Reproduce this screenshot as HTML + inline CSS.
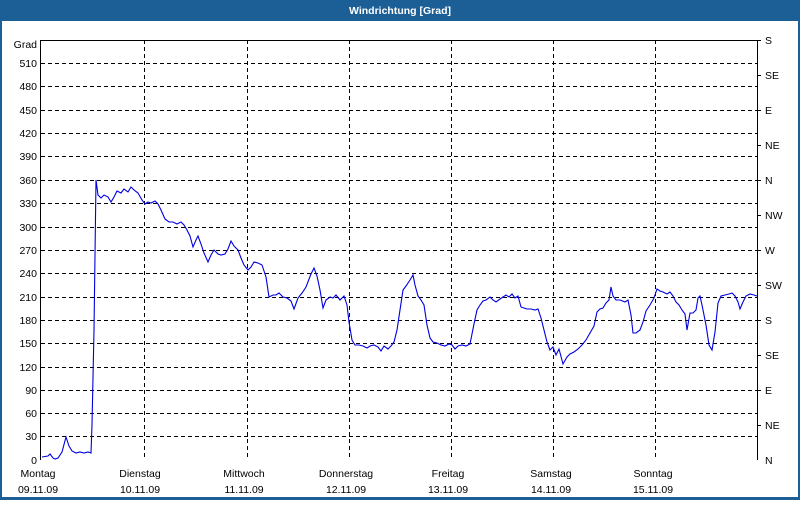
<!DOCTYPE html>
<html><head><meta charset="utf-8"><style>
html,body{margin:0;padding:0;}
body{width:800px;height:500px;overflow:hidden;background:#fff;font-family:"Liberation Sans","DejaVu Sans",sans-serif;}
</style></head><body>
<svg width="800" height="500" xmlns="http://www.w3.org/2000/svg" font-family="Liberation Sans, sans-serif" font-size="10.5">
<rect x="0" y="0" width="800" height="500" fill="#1c5f97"/>
<rect x="2" y="21" width="796" height="476" fill="#fff"/>
<text x="400" y="14" fill="#fff" font-weight="bold" text-anchor="middle" font-size="10.5">Windrichtung [Grad]</text>
<g stroke="#000" stroke-width="1" stroke-dasharray="4,3" shape-rendering="crispEdges">
<line x1="41" y1="63.5" x2="757" y2="63.5"/><line x1="41" y1="86.5" x2="757" y2="86.5"/><line x1="41" y1="110.5" x2="757" y2="110.5"/>
<line x1="41" y1="133.5" x2="757" y2="133.5"/><line x1="41" y1="156.5" x2="757" y2="156.5"/><line x1="41" y1="180.5" x2="757" y2="180.5"/>
<line x1="41" y1="203.5" x2="757" y2="203.5"/><line x1="41" y1="227.5" x2="757" y2="227.5"/><line x1="41" y1="250.5" x2="757" y2="250.5"/>
<line x1="41" y1="273.5" x2="757" y2="273.5"/><line x1="41" y1="297.5" x2="757" y2="297.5"/><line x1="41" y1="320.5" x2="757" y2="320.5"/>
<line x1="41" y1="343.5" x2="757" y2="343.5"/><line x1="41" y1="367.5" x2="757" y2="367.5"/><line x1="41" y1="390.5" x2="757" y2="390.5"/>
<line x1="41" y1="413.5" x2="757" y2="413.5"/><line x1="41" y1="436.5" x2="757" y2="436.5"/>
<line x1="144.5" y1="40" x2="144.5" y2="460"/><line x1="247.5" y1="40" x2="247.5" y2="460"/><line x1="349.5" y1="40" x2="349.5" y2="460"/>
<line x1="451.5" y1="40" x2="451.5" y2="460"/><line x1="553.5" y1="40" x2="553.5" y2="460"/><line x1="655.5" y1="40" x2="655.5" y2="460"/>
</g>
<g stroke="#000" stroke-width="1" shape-rendering="crispEdges" fill="none">
<polyline points="40.5,460 40.5,40.5 757.5,40.5 757.5,460"/>
<line x1="757" y1="75.5" x2="761" y2="75.5"/><line x1="757" y1="110.5" x2="761" y2="110.5"/><line x1="757" y1="145.5" x2="761" y2="145.5"/>
<line x1="757" y1="180.5" x2="761" y2="180.5"/><line x1="757" y1="215.5" x2="761" y2="215.5"/><line x1="757" y1="250.5" x2="761" y2="250.5"/>
<line x1="757" y1="285.5" x2="761" y2="285.5"/><line x1="757" y1="320.5" x2="761" y2="320.5"/><line x1="757" y1="355.5" x2="761" y2="355.5"/>
<line x1="757" y1="390.5" x2="761" y2="390.5"/><line x1="757" y1="425.5" x2="761" y2="425.5"/><line x1="757" y1="40.5" x2="761" y2="40.5"/>
</g>
<g fill="#000" text-anchor="end">
<text x="37" y="48">Grad</text>
<text x="37" y="67">510</text><text x="37" y="90">480</text><text x="37" y="114">450</text><text x="37" y="137">420</text>
<text x="37" y="160">390</text><text x="37" y="184">360</text><text x="37" y="207">330</text><text x="37" y="231">300</text>
<text x="37" y="254">270</text><text x="37" y="277">240</text><text x="37" y="301">210</text><text x="37" y="324">180</text>
<text x="37" y="347">150</text><text x="37" y="371">120</text><text x="37" y="394">90</text><text x="37" y="417">60</text>
<text x="37" y="440">30</text><text x="37" y="464">0</text>
</g>
<g fill="#000">
<text x="765" y="44">S</text><text x="765" y="79">SE</text><text x="765" y="114">E</text><text x="765" y="149">NE</text>
<text x="765" y="184">N</text><text x="765" y="219">NW</text><text x="765" y="254">W</text><text x="765" y="289">SW</text>
<text x="765" y="324">S</text><text x="765" y="359">SE</text><text x="765" y="394">E</text><text x="765" y="429">NE</text><text x="765" y="464">N</text>
</g>
<g fill="#000" text-anchor="middle">
<text x="38" y="477">Montag</text><text x="38" y="493">09.11.09</text>
<text x="140" y="477">Dienstag</text><text x="140" y="493">10.11.09</text>
<text x="244" y="477">Mittwoch</text><text x="244" y="493">11.11.09</text>
<text x="346" y="477">Donnerstag</text><text x="346" y="493">12.11.09</text>
<text x="448" y="477">Freitag</text><text x="448" y="493">13.11.09</text>
<text x="551" y="477">Samstag</text><text x="551" y="493">14.11.09</text>
<text x="653" y="477">Sonntag</text><text x="653" y="493">15.11.09</text>
</g>
<polyline fill="none" stroke="#0000e0" stroke-width="1.1" points="42,457 48,456 50,454 53,458 55,459 58,458 62,452 66,437 69,446 72,451 76,453 80,452 84,453 88,452 91,453 92,425 94,330 96,180 98,195 101,198 104,195 108,197 111,202 114,197 117,191 121,193 124,189 128,192 131,187 134,190 138,193 142,200 145,204 148,202 151,203 155,201 158,204 161,210 165,219 169,222 173,222 177,224 181,222 184,225 187,230 190,236 193,247 196,240 198,236 201,244 204,253 208,262 211,255 214,250 218,254 221,255 225,254 228,249 231,241 234,246 238,250 241,258 244,265 248,270 251,267 254,262 258,263 262,265 266,277 269,297 273,295 276,295 279,293 283,297 287,298 291,301 294,309 298,298 302,293 306,287 311,274 314,268 317,276 320,290 323,308 326,300 330,297 333,298 336,295 340,300 344,296 347,305 349,322 352,340 355,345 359,345 363,346 367,348 370,346 374,345 378,347 381,351 384,346 388,349 391,346 394,342 397,330 400,310 403,290 406,286 410,280 413,275 415,285 418,296 421,300 424,305 427,325 430,338 433,342 437,343 441,345 445,346 449,344 452,345 455,349 458,346 462,345 466,346 470,344 474,324 477,310 480,305 483,301 486,300 490,297 493,300 496,302 500,299 503,297 506,295 509,297 512,294 515,298 518,296 521,307 524,308 527,309 531,309 535,310 538,309 541,318 544,330 547,342 550,350 553,347 556,355 559,349 563,364 567,357 570,354 574,352 578,349 582,345 586,340 590,333 594,326 597,312 600,309 603,308 606,303 609,300 611,287 613,296 616,300 620,300 625,302 628,300 631,315 633,333 636,333 640,330 643,322 646,311 650,305 654,298 657,289 660,291 663,292 667,294 670,292 673,296 676,302 679,305 682,310 685,314 687,330 690,313 693,313 696,310 698,298 700,296 702,305 706,325 709,345 712,350 715,332 718,303 721,296 725,295 729,294 732,293 735,296 738,302 740,309 743,302 746,296 750,294 754,295 757,296"/>
</svg>
</body></html>
